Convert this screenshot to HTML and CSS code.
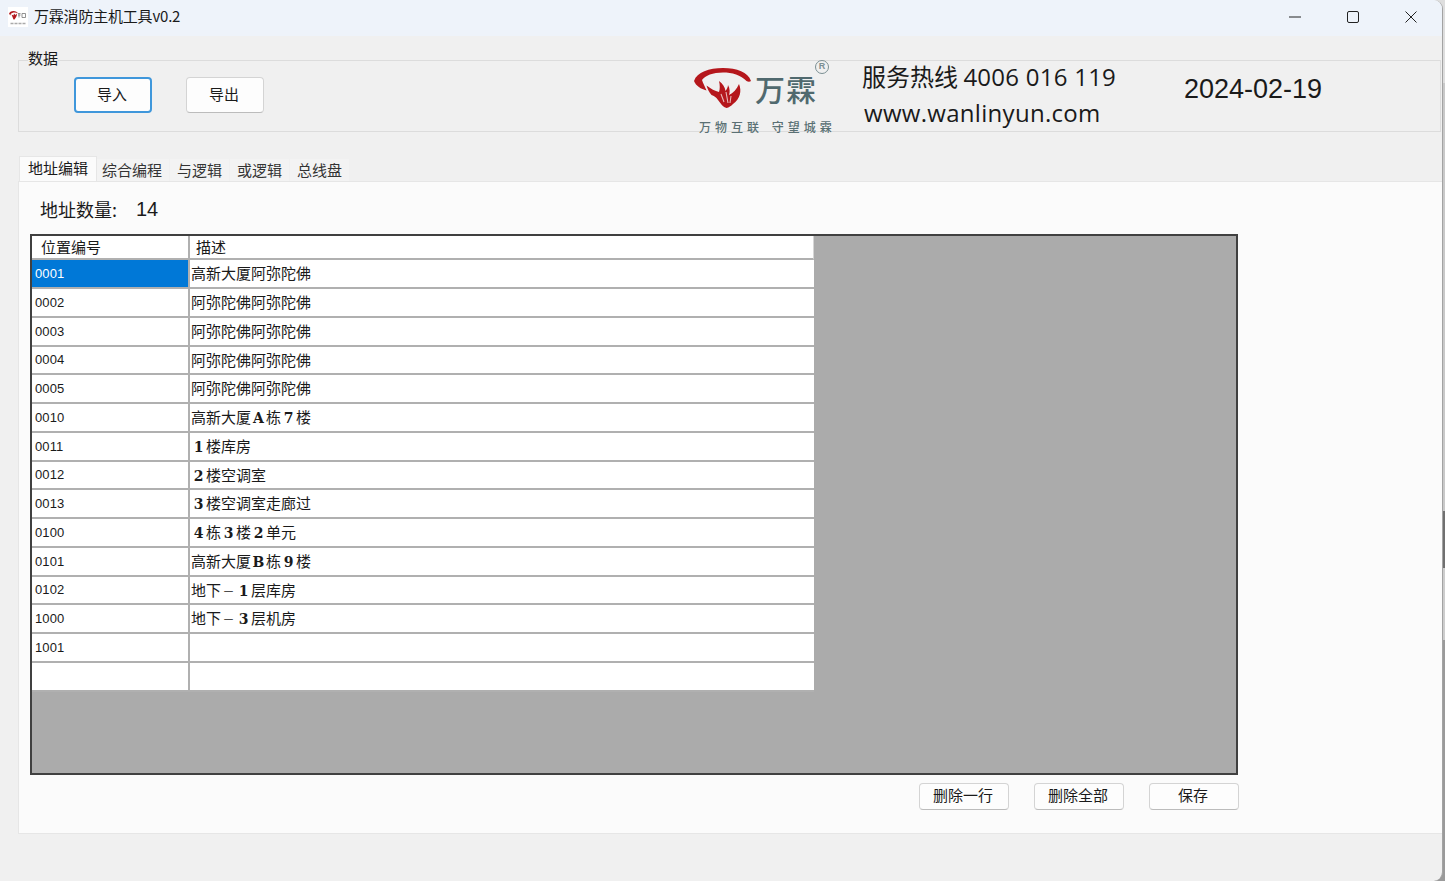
FILE: index.html
```html
<!DOCTYPE html>
<html lang="zh-CN">
<head>
<meta charset="utf-8">
<title>万霖消防主机工具v0.2</title>
<link rel="stylesheet" href="styles.css">
</head>
<body>
<div class="window">
  <header class="titlebar">
    <div class="title-left">
      <div class="app-icon">
        <svg width="20" height="20" viewBox="0 0 20 20"><rect width="20" height="20" fill="#fff"/><path d="M1 7C1.500 3 9 3 10 6.500C8 5 4 5 2.500 7.500L3 8.500Z" fill="#b3181d"/><path d="M3.500 7.500L5.500 8.500L6 6.500L7.500 8L9 6.500C9 9 8 10.500 6.500 12.500L5.500 12.500Z" fill="#b3181d"/><path d="M10 6.500H12.500M10 8H12.500M11 6.500V10.500M14 6.500H17.500V10.500H14Z" fill="none" stroke="#777" stroke-width=".8"/><path d="M2.500 16.500H5.500M6.500 16.500H9.500M10.500 16.500H13.500M14.500 16.500H17.500" stroke="#aaa" stroke-width="1.400"/></svg>
      </div>
      <span class="title-text">万霖消防主机工具v0.2</span>
    </div>
    <div class="win-controls">
      <svg class="win-min" width="12" height="12" viewBox="0 0 12 12"><path d="M0 6H12" stroke="#222" stroke-width="1"/></svg>
      <svg class="win-max" width="12" height="12" viewBox="0 0 12 12"><rect x=".5" y=".5" width="11" height="11" rx="1.500" fill="none" stroke="#222"/></svg>
      <svg class="win-close" width="12" height="12" viewBox="0 0 12 12"><path d="M.5 .5L11.500 11.500M11.500 .5L.5 11.500" stroke="#222"/></svg>
    </div>
  </header>

  <main class="content">
    <section class="group">
      <span class="group-label">数据</span>
      <div class="group-buttons">
        <button class="btn btn-lg btn-focus">导入</button>
        <button class="btn btn-lg">导出</button>
      </div>
      <div class="brand">
        <div class="logo">
          <svg class="logo-mark" width="58" height="42" viewBox="0 0 58 42">
            <path d="M0 14C3 5 15 1 29 1C43 1 54 5 57 14C56 15 54 15 52.500 14C47 8 38 5.500 29 5.500C19 5.500 11 8.500 8 13C9 16 11 20 12.500 23.500C7 22 2 19 0 14Z" fill="#b5171c"/>
            <path d="M12.500 18.500C17 22 21 24 25 25C26 22 26 18 25 14C29 17 31 20 31.500 24C33 22 34 20 34 18C36 22 36 25 35 28C39 26 43 22 45 17C48 24 46 32 39 37C37 39 35 40.500 32.500 41C29 40 27 37 24 33C22 30 20 29 17.500 28C15 25 13.500 22 12.500 18.500Z" fill="#b5171c"/>
            <path d="M27 27L30 35M32 25L34 36M37 29L36 36" stroke="#e9b9b9" stroke-width="1.100" fill="none"/>
          </svg>
          <span class="logo-name">万霖</span>
          <span class="logo-reg">R</span>
          <span class="logo-slogan">万物互联 守望城霖</span>
        </div>
        <div class="contact">
          <div class="hotline">服务热线 <span class="hotline-num">4006 016 119</span></div>
          <div class="site">www.wanlinyun.com</div>
        </div>
        <div class="date">2024-02-19</div>
      </div>
    </section>

    <nav class="tabs">
      <span class="tab tab-active">地址编辑</span>
      <span class="tab">综合编程</span>
      <span class="tab">与逻辑</span>
      <span class="tab">或逻辑</span>
      <span class="tab">总线盘</span>
    </nav>

    <section class="pane">
      <div class="count"><span class="count-label">地址数量:</span><span class="count-num">14</span></div>
      <div class="grid-frame">
        <table class="grid">
          <thead><tr><th class="col-a">位置编号</th><th class="col-b">描述</th></tr></thead>
          <tbody>
            <tr><td class="selected">0001</td><td>高新大厦阿弥陀佛</td></tr>
            <tr><td>0002</td><td>阿弥陀佛阿弥陀佛</td></tr>
            <tr><td>0003</td><td>阿弥陀佛阿弥陀佛</td></tr>
            <tr><td>0004</td><td>阿弥陀佛阿弥陀佛</td></tr>
            <tr><td>0005</td><td>阿弥陀佛阿弥陀佛</td></tr>
            <tr><td>0010</td><td>高新大厦<b>A</b>栋<b>7</b>楼</td></tr>
            <tr><td>0011</td><td><b>1</b>楼库房</td></tr>
            <tr><td>0012</td><td><b>2</b>楼空调室</td></tr>
            <tr><td>0013</td><td><b>3</b>楼空调室走廊过</td></tr>
            <tr><td>0100</td><td><b>4</b>栋<b>3</b>楼<b>2</b>单元</td></tr>
            <tr><td>0101</td><td>高新大厦<b>B</b>栋<b>9</b>楼</td></tr>
            <tr><td>0102</td><td>地下<i>－</i><b>1</b>层库房</td></tr>
            <tr><td>1000</td><td>地下<i>－</i><b>3</b>层机房</td></tr>
            <tr><td>1001</td><td></td></tr>
            <tr><td></td><td></td></tr>
          </tbody>
        </table>
      </div>
      <div class="actions">
        <button class="btn btn-sm">删除一行</button>
        <button class="btn btn-sm">删除全部</button>
        <button class="btn btn-sm">保存</button>
      </div>
    </section>
  </main>
</div>
</body>
</html>
```
FILE: styles.css
```css
* { box-sizing: border-box; }
html, body { margin: 0; height: 100%; overflow: hidden; }
body {
  font-family: "Noto Sans CJK SC", "Liberation Sans", sans-serif;
  font-size: 15px;
  color: #1a1a1a;
  background: linear-gradient(to bottom, #dedede 0, #dedede 83px, #c9c9c9 83px, #c9c9c9 511px, #707070 511px, #707070 568px, #cdcdcd 568px, #cdcdcd 640px, #9a9a9a 640px, #9a9a9a 100%);
}
.window { width: 1443px; height: 881px; display: flex; flex-direction: column; background: #f0f0f0; border-right: 1px solid #a3a3a3; border-radius: 0 9px 9px 0; overflow: hidden; }

.titlebar { height: 36px; flex: none; background: #eef3fa; display: flex; justify-content: space-between; align-items: center; }
.title-left { display: flex; align-items: center; padding-left: 8px; }
.app-icon { width: 20px; height: 20px; margin-right: 6px; margin-top: -3px; }
.app-icon svg { display: block; }
.title-text { font-size: 15px; line-height: 20px; margin-top: -5px; letter-spacing: -.2px; }
.win-controls { display: flex; align-items: center; gap: 46px; padding-right: 25px; margin-top: -3px; }
.win-controls svg { display: block; }

.content { flex: 1; padding: 24px 0 0 18px; display: flex; flex-direction: column; }

.group { position: relative; height: 72px; margin-right: 1px; border: 1px solid #dcdcdc; display: flex; align-items: flex-start; }
.group-label { position: absolute; top: -12px; left: 9px; font-size: 15px; line-height: 18px; background: #f0f0f0; }
.group-buttons { display: flex; gap: 34px; padding: 16px 0 0 55px; }

.btn { font-family: inherit; color: #1a1a1a; background: #fdfdfd; border: 1px solid #d4d4d4; border-bottom-color: #bcbcbc; border-radius: 4px; padding: 0 2px 3px 0; }
.btn-lg { width: 78px; height: 36px; font-size: 15px; }
.btn-focus { border: 2px solid #3f97db; }
.btn-sm { width: 90px; height: 27px; font-size: 15px; line-height: 20px; padding-bottom: 4px; }

.brand { position: absolute; top: 0; left: 0; right: 0; bottom: 0; pointer-events: none; }
.logo { position: absolute; left: 676px; top: 0; width: 145px; height: 72px; }
.logo-mark { position: absolute; left: -1px; top: 6px; }
.logo-name { position: absolute; left: 60px; top: 12px; font-size: 30px; line-height: 30px; color: #50696e; font-weight: 500; letter-spacing: 1px; white-space: nowrap; }
.logo-reg { position: absolute; left: 120px; top: -1px; width: 14px; height: 14px; border: 1.5px solid #7b8f93; border-radius: 50%; font-family: "Liberation Sans", sans-serif; font-size: 9px; font-weight: 700; line-height: 11px; text-align: center; color: #7b8f93; }
.logo-slogan { position: absolute; left: 4px; top: 58px; font-size: 12px; line-height: 16px; font-weight: 500; color: #5a7074; letter-spacing: 4px; word-spacing: 2px; white-space: nowrap; }
.contact { position: absolute; left: 843px; top: 0; }
.hotline { font-size: 24px; line-height: 32px; margin-top: -1px; white-space: nowrap; }
.hotline-num { font-family: "Open Sans", sans-serif; letter-spacing: .25px; }
.site { font-family: "Open Sans", sans-serif; font-size: 24px; line-height: 28px; margin: 6px 0 0 2px; letter-spacing: .3px; white-space: nowrap; }
.date { position: absolute; left: 1165px; top: 10px; font-family: "Liberation Sans", sans-serif; font-size: 27px; line-height: 36px; white-space: nowrap; }

.tabs { display: flex; margin-top: 23px; height: 26px; align-items: flex-end; padding-left: 1px; flex: none; gap: 1px; }
.tab { height: 22px; padding: 0 7px; font-size: 15px; line-height: 22px; background: #f3f3f3; color: #333; }
.tab-active { position: relative; height: 25px; background: #fbfbfb; margin-right: -3px; padding: 0 8px; line-height: 22px; border: 1px solid #e6e6e6; border-bottom: 0; color: #1a1a1a; }

.pane { height: 653px; flex: none; background: #fbfbfb; border-top: 1px solid #e6e6e6; border-left: 1px solid #e6e6e6; border-bottom: 1px solid #e6e6e6; padding: 0 0 0 11px; display: flex; flex-direction: column; }
.count { height: 52px; padding: 13px 0 0 10px; line-height: 28px; display: flex; flex: none; }
.count-label { font-size: 18px; width: 96px; }
.count-num { font-family: "Liberation Sans", sans-serif; font-size: 20px; }

.grid-frame { width: 1208px; height: 541px; border: 2px solid #404040; background: #ababab; flex: none; overflow: hidden; }
.grid { border-collapse: separate; border-spacing: 0; table-layout: fixed; width: 782px; background: #fff; font-size: 15px; }
.grid th, .grid td { padding: 0; border-right: 2px solid #b0b0b0; border-bottom: 2px solid #b0b0b0; overflow: hidden; white-space: nowrap; text-align: left; font-weight: 400; }
.grid th { height: 24px; line-height: 20px; }
.grid th.col-a { width: 158px; padding-left: 9px; }
.grid th.col-b { padding-left: 6px; border-right: 1px solid #d6d6d6; }
.grid td { height: 29px; line-height: 20px; padding-left: 1px; }
.grid tbody tr:nth-child(4n) td { height: 28px; }
.grid td:first-child { font-family: "Liberation Sans", sans-serif; font-size: 13px; padding-left: 3px; letter-spacing: .1px; }
.grid td:last-child { border-right: 0; padding-bottom: 1px; }
.grid td.selected { background: #0078d7; color: #fff; }
.grid b, .grid i { display: inline-block; width: 15px; text-align: center; font-style: normal; line-height: 16px; vertical-align: baseline; }
.grid b { font-family: "DejaVu Serif", serif; font-size: 14px; font-weight: 700; }
.grid i { font-size: 12px; }

.actions { display: flex; justify-content: flex-end; gap: 25px; width: 1209px; margin-top: 8px; }
```
